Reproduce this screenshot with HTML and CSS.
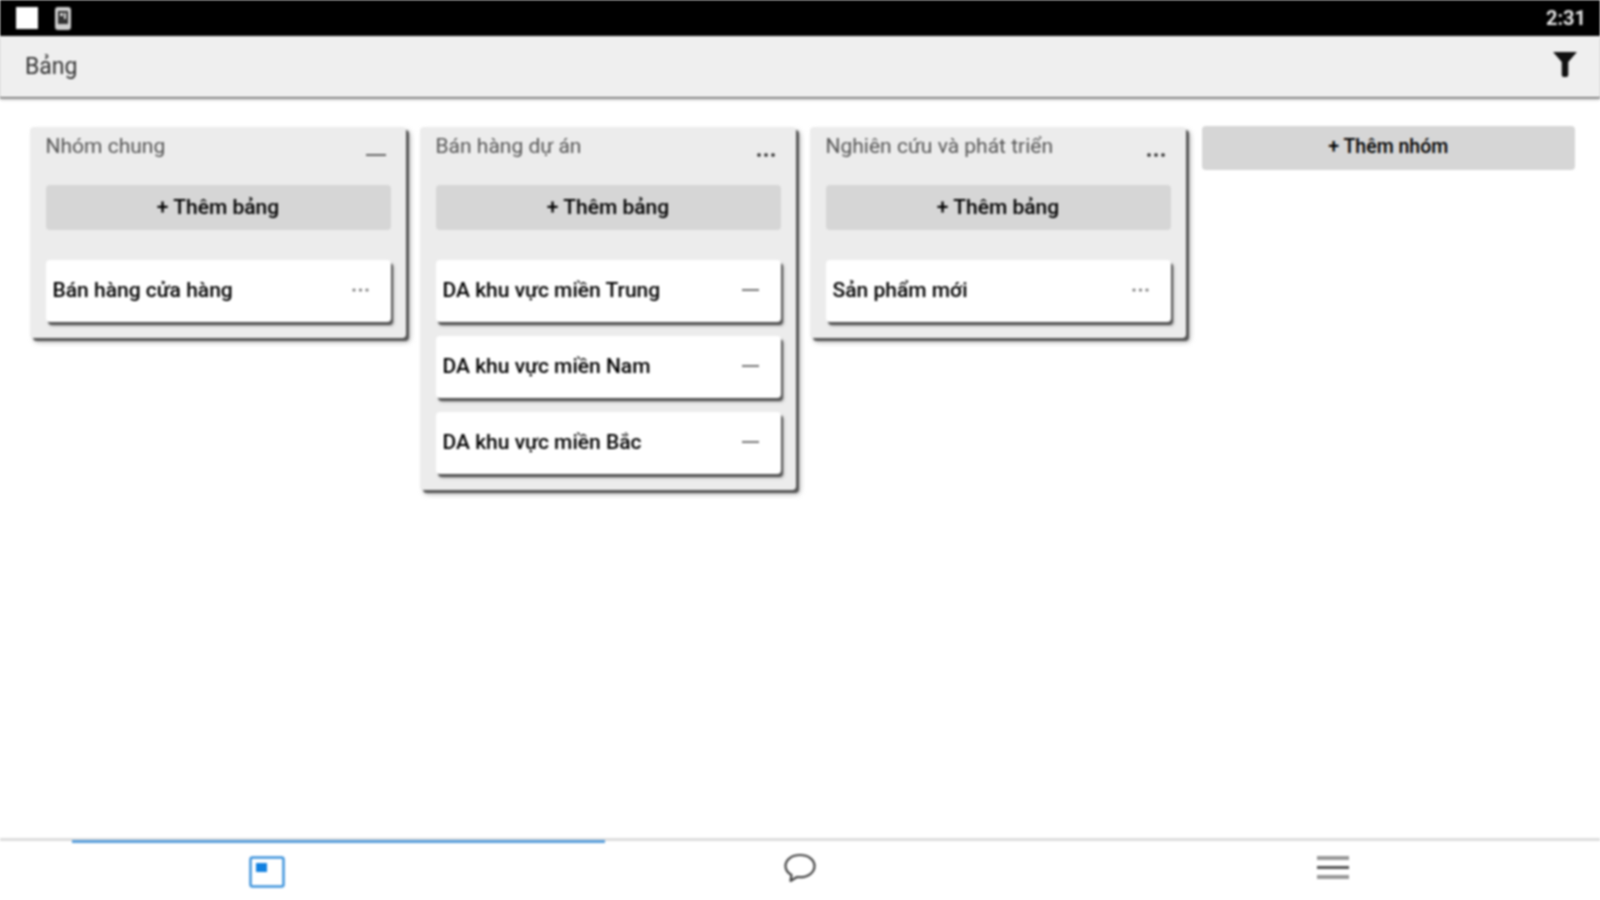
FILE: index.html
```html
<!DOCTYPE html>
<html lang="vi">
<head>
<meta charset="utf-8">
<title>Bảng</title>
<link rel="stylesheet" href="styles.css">
</head>
<body>
<div class="app">
  <header class="status">
    <div class="status-icons">
      <span class="status-square"></span>
      <svg class="status-phone" width="18" height="25" viewBox="0 0 18 25"><rect x="1" y="1" width="16" height="23" rx="3" fill="#cfcfcf"/><rect x="4" y="5" width="10" height="13" fill="#333"/><rect x="6" y="7" width="3" height="3" fill="#ddd"/><rect x="10" y="7" width="2" height="6" fill="#ddd"/></svg>
    </div>
    <span class="clock">2:31</span>
  </header>
  <div class="topbar">
    <span class="topbar-title">Bảng</span>
    <svg class="filter" width="26" height="26" viewBox="0 0 24 26" preserveAspectRatio="none"><path d="M1 1h22l-8 10v13q0 2-2 2h-2q-2 0-2-2V11z" fill="#111"/></svg>
  </div>
  <main class="board">
    <section class="column">
      <div class="col-head"><span class="col-title">Nhóm chung</span><svg class="col-more" width="20" height="4" viewBox="0 0 20 4"><rect y="1" width="20" height="2" fill="#666"/></svg></div>
      <button class="add">+ Thêm bảng</button>
      <div class="cards">
        <div class="card"><span>Bán hàng cửa hàng</span><svg class="more" width="17" height="4" viewBox="0 0 17 4"><circle cx="2" cy="2" r="1.600"/><circle cx="8.500" cy="2" r="1.600"/><circle cx="15" cy="2" r="1.600"/></svg></div>
      </div>
    </section>
    <section class="column">
      <div class="col-head"><span class="col-title">Bán hàng dự án</span><svg class="col-more" width="20" height="4" viewBox="0 0 20 4"><circle cx="3" cy="2" r="1.800"/><circle cx="10" cy="2" r="1.800"/><circle cx="17" cy="2" r="1.800"/></svg></div>
      <button class="add">+ Thêm bảng</button>
      <div class="cards">
        <div class="card"><span>DA khu vực miền Trung</span><svg class="more" width="17" height="4" viewBox="0 0 17 4"><rect y="1" width="17" height="2"/></svg></div>
        <div class="card"><span>DA khu vực miền Nam</span><svg class="more" width="17" height="4" viewBox="0 0 17 4"><rect y="1" width="17" height="2"/></svg></div>
        <div class="card"><span>DA khu vực miền Bắc</span><svg class="more" width="17" height="4" viewBox="0 0 17 4"><rect y="1" width="17" height="2"/></svg></div>
      </div>
    </section>
    <section class="column">
      <div class="col-head"><span class="col-title">Nghiên cứu và phát triển</span><svg class="col-more" width="20" height="4" viewBox="0 0 20 4"><circle cx="3" cy="2" r="1.800"/><circle cx="10" cy="2" r="1.800"/><circle cx="17" cy="2" r="1.800"/></svg></div>
      <button class="add">+ Thêm bảng</button>
      <div class="cards">
        <div class="card"><span>Sản phẩm mới</span><svg class="more" width="17" height="4" viewBox="0 0 17 4"><circle cx="2" cy="2" r="1.600"/><circle cx="8.500" cy="2" r="1.600"/><circle cx="15" cy="2" r="1.600"/></svg></div>
      </div>
    </section>
    <button class="add add-group">+ Thêm nhóm</button>
  </main>
  <nav class="tabs">
    <span class="indicator"></span>
    <div class="tab tab-board">
      <svg width="36" height="32" viewBox="0 0 36 32"><rect x="1.500" y="1.500" width="33" height="29" rx="2" fill="#fff" stroke="#3f94dc" stroke-width="2.500"/><rect x="7" y="7" width="11" height="9" fill="#1180e0"/></svg>
    </div>
    <div class="tab tab-chat">
      <svg width="34" height="30" viewBox="0 0 34 30"><path d="M17 2C9 2 2.500 6.500 2.500 13c0 4 2.500 7 6 9l-1 6 6.500-4c1 .2 2 .2 3 .2 8 0 14.500-4.700 14.500-11.200S25 2 17 2z" fill="#fff" stroke="#444" stroke-width="2.200" stroke-linejoin="round"/></svg>
    </div>
    <div class="tab tab-menu">
      <svg width="32" height="24" viewBox="0 0 32 24"><rect y="0" width="32" height="4" fill="#999"/><rect y="10" width="32" height="3" fill="#555"/><rect y="19" width="32" height="4" fill="#999"/></svg>
    </div>
  </nav>
</div>
</body>
</html>
```
FILE: styles.css
```css
* { box-sizing: border-box; }
html, body { margin: 0; height: 100%; }
body { background: #fff; font-family: Roboto, "Liberation Sans", sans-serif; color: #111; overflow: hidden; }
.app { width: 1600px; height: 900px; display: flex; flex-direction: column; position: relative; filter: blur(0.9px); }

.status { height: 36px; flex: none; background: #000; display: flex; align-items: center; justify-content: space-between; padding: 0 14px 0 16px; }
.status-icons { display: flex; align-items: center; gap: 16px; }
.status-square { width: 22px; height: 22px; background: #fff; display: block; }
.clock { color: #e4e4e4; font-size: 20px; font-weight: 700; }

.topbar { height: 61px; flex: none; background: #efefef; box-shadow: 0 1px 1px #666, 0 2px 3px #999; display: flex; align-items: center; justify-content: space-between; padding: 0 22px 6px 25px; position: relative; }
.topbar-title { font-size: 23px; color: #333; padding-top: 5px; }

.board { flex: 1; display: flex; align-items: flex-start; gap: 14.500px; padding: 30px 25px 0 30px; }
.column { width: 375.500px; flex: none; background: #ececec; border-radius: 4px; padding: 0 15px 17px 15.500px; box-shadow: 3px 3px 1px #555, 4px 4px 5px #aaa; }
.col-head { height: 58px; display: flex; justify-content: space-between; align-items: flex-start; padding-top: 6px; }
.col-title { font-size: 21px; line-height: 26px; color: #555; }
.col-more { margin-top: 20px; margin-right: 5px; fill: #222; }

.add { display: block; width: 100%; height: 45px; border: 0; border-radius: 4px; background: #d6d6d6; font: 500 21px Roboto, "Liberation Sans", sans-serif; color: #000; padding: 0 0 2px; }
.add-group { flex: 1; width: auto; height: 44px; margin-top: -1px; margin-left: 1.500px; padding-bottom: 4px; font-size: 19.500px; }

.cards { display: flex; flex-direction: column; gap: 14px; margin-top: 30px; }
.card { height: 62px; background: #fff; border-radius: 4px; display: flex; align-items: center; justify-content: space-between; padding: 0 22px 2px 7px; font-size: 21px; font-weight: 500; color: #000; box-shadow: 2px 3px 1px #555, 3px 4px 3px #aaa; }
.column .cards { margin-bottom: -1px; }
.more { fill: #777; }

.tabs { height: 62px; flex: none; display: flex; position: relative; border-top: 3px solid #ddd; margin-top: auto; }
.indicator { position: absolute; left: 72px; top: -1px; width: 533px; height: 3px; background: #5a9fdc; }
.tab { flex: 1; display: flex; justify-content: center; align-items: flex-start; }
.tab-board { padding-top: 15px; }
.tab-chat { padding-top: 12px; }
.tab-menu { padding-top: 15px; }
```
